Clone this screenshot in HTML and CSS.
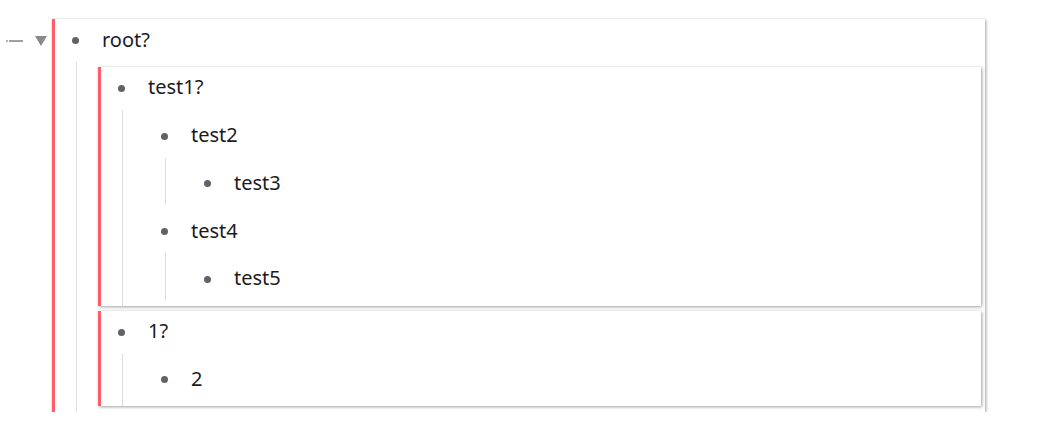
FILE: index.html
```html
<!DOCTYPE html>
<html>
<head>
<meta charset="utf-8">
<link rel="stylesheet" href="styles.css">
</head>
<body>
<div class="page">
  <div class="gutter">
    <span class="dash"><span class="dot"></span><span class="line"></span></span>
    <svg class="caret" width="12" height="10" viewBox="0 0 12 10"><path d="M0 0 H12 L6 10 Z" fill="#8a8a8a"/></svg>
  </div>
  <div class="card root-card">
    <div class="row"><span class="slot"><span class="bullet"></span></span><span class="label">root?</span></div>
    <div class="children root-children">
      <div class="node">
        <div class="card">
          <div class="row"><span class="slot"><span class="bullet"></span></span><span class="label">test1?</span></div>
          <div class="children card-children">
            <div class="node">
              <div class="row"><span class="slot"><span class="bullet"></span></span><span class="label">test2</span></div>
              <div class="children">
                <div class="node">
                  <div class="row"><span class="slot"><span class="bullet"></span></span><span class="label">test3</span></div>
                </div>
              </div>
            </div>
            <div class="node">
              <div class="row"><span class="slot"><span class="bullet"></span></span><span class="label">test4</span></div>
              <div class="children">
                <div class="node">
                  <div class="row"><span class="slot"><span class="bullet"></span></span><span class="label">test5</span></div>
                </div>
              </div>
            </div>
          </div>
        </div>
      </div>
      <div class="node">
        <div class="card">
          <div class="row"><span class="slot"><span class="bullet"></span></span><span class="label">1?</span></div>
          <div class="children card-children">
            <div class="node">
              <div class="row"><span class="slot"><span class="bullet"></span></span><span class="label">2</span></div>
            </div>
          </div>
        </div>
      </div>
    </div>
  </div>
</div>
</body>
</html>
```

FILE: styles.css
```css
html, body {
  margin: 0;
  padding: 0;
  background: #ffffff;
}

body {
  font-family: "Noto Sans", "Open Sans", sans-serif;
  font-size: 20px;
  color: #1c1c1c;
}

.page {
  display: flex;
  align-items: flex-start;
  padding-top: 19px;
}

.gutter {
  width: 52px;
  height: 43px;
  flex: none;
  display: flex;
  align-items: center;
}

.dash {
  display: flex;
  align-items: center;
  margin-left: 6px;
  width: 19px;
}

.dash .dot {
  width: 2px;
  height: 2px;
  background: #9a9a9a;
  border-radius: 1px;
}

.dash .line {
  width: 14px;
  height: 2px;
  margin-left: 1px;
  background: #a0a0a0;
}

.caret {
  margin-left: 10px;
  margin-top: 1px;
}

.card {
  background: #ffffff;
  border-left: 3px solid #ff5c69;
  box-shadow: 1px 1px 3px rgba(0, 0, 0, 0.36), 0 0 2px rgba(0, 0, 0, 0.06);
}

.root-card {
  width: 930px;
}

.row {
  display: flex;
  align-items: center;
  height: 43px;
  padding-left: 16px;
}

.slot {
  width: 8px;
  display: flex;
  justify-content: center;
}

.bullet {
  width: 7px;
  height: 7px;
  border-radius: 50%;
  background: #5f6368;
}

.label {
  margin-left: 23px;
  margin-bottom: 2px;
  line-height: 1;
}

.children {
  margin-left: 21px;
  border-left: 1px solid #dddddd;
  padding-left: 21px;
}

.node {
  padding-top: 4.75px;
}

.root-children {
  padding-right: 4px;
  padding-bottom: 6px;
}

.card-children {
  padding-bottom: 5px;
}
```
